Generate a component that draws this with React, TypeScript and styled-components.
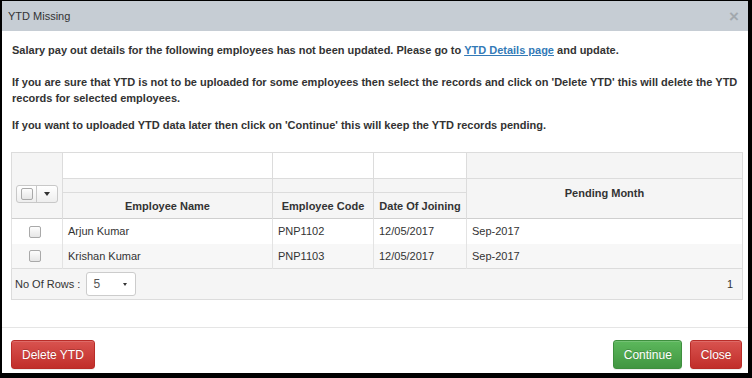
import React from "react";
import styled, { createGlobalStyle } from "styled-components";

const Global = createGlobalStyle`
  html, body { margin: 0; padding: 0; background: #000; }
  body { font-family: "Liberation Sans", Arial, sans-serif; color: #333; }
  * { box-sizing: border-box; }
`;

const Dialog = styled.div`
  margin: 1px 4px 0 2px;
  height: 372px;
  background: #fff;
  display: flex;
  flex-direction: column;
`;

const Header = styled.div`
  height: 30px;
  background: #c6cdd4;
  display: flex;
  align-items: center;
  justify-content: space-between;
  padding: 0 9px 0 6px;
  font-size: 11px;
  color: #333;
`;

const CloseX = styled.span`
  font-size: 17px;
  font-weight: bold;
  color: #a2a8ad;
  line-height: 1;
`;

const Body = styled.div`
  flex: 1;
  padding: 11px 6px 0 9px;
`;

const Para = styled.p<{ $mb: number }>`
  margin: 0 0 ${(p) => p.$mb}px 1px;
  font-size: 11px;
  line-height: 16px;
  font-weight: bold;
  color: #333;
`;

const Link = styled.a`
  color: #337ab7;
  text-decoration: underline;
`;

const Grid = styled.table`
  width: 731px;
  border-collapse: collapse;
  table-layout: fixed;
  border: 1px solid #dcdcdc;
  font-size: 11px;
  color: #333;
`;

const Th = styled.th<{ $bg?: string; $h?: number; $valign?: string; $pt?: number }>`
  background: ${(p) => p.$bg || "#f5f5f5"};
  height: ${(p) => p.$h || 26}px;
  border-left: 1px solid #dcdcdc;
  border-top: 1px solid #dcdcdc;
  font-weight: bold;
  text-align: center;
  vertical-align: ${(p) => p.$valign || "middle"};
  padding: ${(p) => p.$pt || 0}px 4px 0 4px;
`;

const HeadRow = styled.tr<{ $last?: boolean }>`
  ${(p) => (p.$last ? "border-bottom: 1px solid #cfcfcf;" : "")}
`;

const Row = styled.tr<{ $alt?: boolean }>`
  height: 25px;
  background: ${(p) => (p.$alt ? "#f7f7f7" : "#fff")};
`;

const Td = styled.td<{ $center?: boolean }>`
  border-left: 1px solid #e3e3e3;
  padding: 0 5px;
  text-align: ${(p) => (p.$center ? "center" : "left")};
  white-space: nowrap;
  overflow: hidden;
`;

const CheckTd = styled(Td)`
  padding: 0 4px 0 0;
`;

const PagerCell = styled.td`
  background: #f5f5f5;
  height: 31px;
  border-top: 1px solid #dcdcdc;
  padding: 0 9px 0 3px;
`;

const Pager = styled.div`
  display: flex;
  align-items: center;
  justify-content: space-between;
`;

const PagerLeft = styled.div`
  display: flex;
  align-items: center;
  gap: 6px;
  color: #333;
`;

const PageNum = styled.span`
  color: #333;
  font-size: 11px;
`;

const Select = styled.div`
  width: 50px;
  height: 24px;
  border: 1px solid #ccc;
  border-radius: 3px;
  background: #fff;
  display: flex;
  align-items: center;
  justify-content: space-between;
  padding: 0 8px 0 6px;
  font-size: 12px;
  color: #555;
`;

const Caret = styled.span<{ $size?: number }>`
  width: 0;
  height: 0;
  border-left: ${(p) => p.$size || 3}px solid transparent;
  border-right: ${(p) => p.$size || 3}px solid transparent;
  border-top: ${(p) => (p.$size || 3) + 1}px solid #333;
`;

const Check = styled.span`
  display: inline-block;
  width: 12px;
  height: 12px;
  border: 1px solid #a9a9a9;
  border-radius: 2px;
  background: linear-gradient(#fdfdfd, #e6e6e6);
  vertical-align: middle;
`;

const BtnGroup = styled.div`
  display: inline-flex;
  height: 18px;
  border: 1px solid #c8c8c8;
  border-radius: 3px;
  background: linear-gradient(#ffffff, #eeeeee);
  margin-top: 32px;
`;

const BtnPart = styled.span<{ $w: number; $divider?: boolean }>`
  width: ${(p) => p.$w}px;
  display: flex;
  align-items: center;
  justify-content: center;
  ${(p) => (p.$divider ? "border-left: 1px solid #c8c8c8;" : "")}
`;

const Footer = styled.div`
  height: 46px;
  border-top: 1px solid #e5e5e5;
  padding: 12px 6px 0 9px;
  display: flex;
  align-items: flex-start;
  justify-content: space-between;
`;

const Right = styled.div`
  display: flex;
  gap: 8px;
`;

const Button = styled.button<{ $variant: "danger" | "success" }>`
  height: 29px;
  padding: 0 9.5px;
  font-family: "Liberation Sans", Arial, sans-serif;
  font-size: 12px;
  color: #fff;
  border-radius: 3px;
  text-shadow: 0 -1px 0 rgba(0, 0, 0, 0.2);
  box-shadow: inset 0 1px 0 rgba(255, 255, 255, 0.15), 0 1px 1px rgba(0, 0, 0, 0.075);
  background: ${(p) =>
    p.$variant === "danger"
      ? "linear-gradient(#d9534f, #c12e2a)"
      : "linear-gradient(#5cb85c, #419641)"};
  border: 1px solid ${(p) => (p.$variant === "danger" ? "#b92c28" : "#3e8f3e")};
`;

const DeleteButton = styled(Button)`
  padding: 0 10px;
`;

const rows = [
  { name: "Arjun Kumar", code: "PNP1102", doj: "12/05/2017", month: "Sep-2017" },
  { name: "Krishan Kumar", code: "PNP1103", doj: "12/05/2017", month: "Sep-2017" },
];

export default function App() {
  return (
    <>
      <Global />
      <Dialog>
        <Header>
          <span>YTD Missing</span>
          <CloseX>×</CloseX>
        </Header>
        <Body>
          <Para $mb={16}>
            Salary pay out details for the following employees has not been updated. Please go to{" "}
            <Link href="#">YTD Details page</Link> and update.
          </Para>
          <Para $mb={11}>
            If you are sure that YTD is not to be uploaded for some employees then select the records
            and click on 'Delete YTD' this will delete the YTD records for selected employees.
          </Para>
          <Para $mb={19}>
            If you want to uploaded YTD data later then click on 'Continue' this will keep the YTD
            records pending.
          </Para>
          <Grid>
            <colgroup>
              <col style={{ width: 51 }} />
              <col style={{ width: 210 }} />
              <col style={{ width: 101 }} />
              <col style={{ width: 93 }} />
              <col style={{ width: 276 }} />
            </colgroup>
            <thead>
              <tr>
                <Th rowSpan={3} $valign="top">
                  <BtnGroup>
                    <BtnPart $w={19}>
                      <Check />
                    </BtnPart>
                    <BtnPart $w={21} $divider>
                      <Caret />
                    </BtnPart>
                  </BtnGroup>
                </Th>
                <Th $bg="#fff" />
                <Th $bg="#fff" />
                <Th $bg="#fff" />
                <Th />
              </tr>
              <tr>
                <Th $h={14} />
                <Th $h={14} />
                <Th $h={14} />
                <Th rowSpan={2} $valign="top" $pt={8}>
                  Pending Month
                </Th>
              </tr>
              <HeadRow $last>
                <Th>Employee Name</Th>
                <Th>Employee Code</Th>
                <Th>Date Of Joining</Th>
              </HeadRow>
            </thead>
            <tbody>
              {rows.map((r, i) => (
                <Row key={r.code} $alt={i % 2 === 1}>
                  <CheckTd $center>
                    <Check />
                  </CheckTd>
                  <Td>{r.name}</Td>
                  <Td>{r.code}</Td>
                  <Td>{r.doj}</Td>
                  <Td>{r.month}</Td>
                </Row>
              ))}
              <tr>
                <PagerCell colSpan={5}>
                  <Pager>
                    <PagerLeft>
                      <span>No Of Rows :</span>
                      <Select>
                        <span>5</span>
                        <Caret $size={2.5} />
                      </Select>
                    </PagerLeft>
                    <PageNum>1</PageNum>
                  </Pager>
                </PagerCell>
              </tr>
            </tbody>
          </Grid>
        </Body>
        <Footer>
          <DeleteButton $variant="danger">Delete YTD</DeleteButton>
          <Right>
            <Button $variant="success">Continue</Button>
            <Button $variant="danger">Close</Button>
          </Right>
        </Footer>
      </Dialog>
    </>
  );
}
